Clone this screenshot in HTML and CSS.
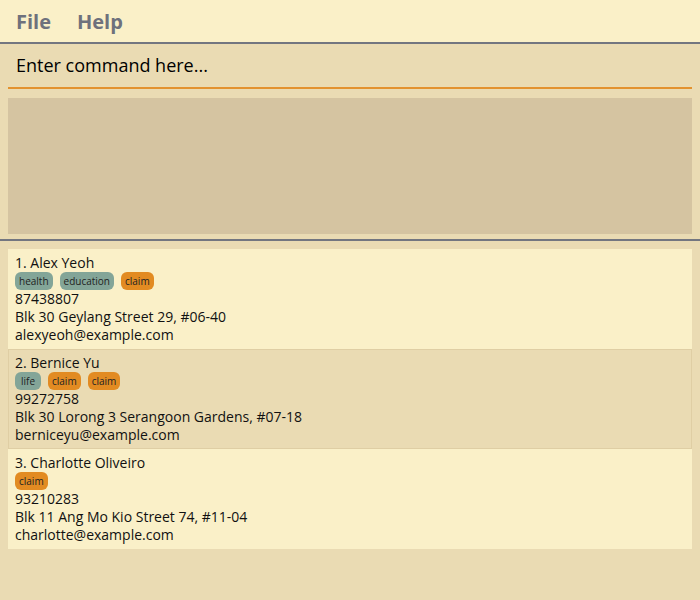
FILE: index.html
```html
<!DOCTYPE html>
<html lang="en">
<head>
<meta charset="utf-8">
<meta name="viewport" content="width=device-width, initial-scale=1">
<title>Contacts</title>
<link rel="stylesheet" href="styles.css">
</head>
<body>
<header class="menu">
  <button class="menu-item" type="button">File</button>
  <button class="menu-item" type="button">Help</button>
</header>
<section class="console">
  <input class="command" type="text" aria-label="Command" placeholder="Enter command here...">
  <div class="result" role="status"></div>
</section>
<main class="people">
  <article class="person">
    <h2 class="name">1. Alex Yeoh</h2>
    <div class="tags"><span class="tag">health</span><span class="tag">education</span><span class="tag claim">claim</span></div>
    <p>87438807</p>
    <p>Blk 30 Geylang Street 29, #06-40</p>
    <p>alexyeoh@example.com</p>
  </article>
  <article class="person">
    <h2 class="name">2. Bernice Yu</h2>
    <div class="tags"><span class="tag">life</span><span class="tag claim">claim</span><span class="tag claim">claim</span></div>
    <p>99272758</p>
    <p>Blk 30 Lorong 3 Serangoon Gardens, #07-18</p>
    <p>berniceyu@example.com</p>
  </article>
  <article class="person">
    <h2 class="name">3. Charlotte Oliveiro</h2>
    <div class="tags"><span class="tag claim">claim</span></div>
    <p>93210283</p>
    <p>Blk 11 Ang Mo Kio Street 74, #11-04</p>
    <p>charlotte@example.com</p>
  </article>
</main>
</body>
</html>
```

FILE: styles.css
```css
* {
  box-sizing: border-box;
}

body {
  margin: 0;
  background: #eadbb3;
  color: #111;
  font: 14px/18px "Open Sans", "Noto Sans", sans-serif;
}

h2,
p {
  margin: 0;
}

.menu {
  display: flex;
  gap: 26px;
  padding: 7px 16px 5px;
  background: #faf0c8;
  border-bottom: 2px solid #737680;
}

.menu-item {
  padding: 0;
  border: 0;
  background: none;
  color: #6e717c;
  font: 700 20px/30px "Open Sans", "Noto Sans", sans-serif;
}

.console {
  padding: 0 8px 5px;
  border-bottom: 2px solid #737680;
}

.command {
  display: block;
  width: 100%;
  height: 45px;
  margin-bottom: 9px;
  padding: 0 8px 2px;
  border: 0;
  border-bottom: 2px solid #e3922f;
  outline: 0;
  background: none;
  color: #000;
  font: 18px/24px "Open Sans", "Noto Sans", sans-serif;
}

.command::placeholder {
  color: #000;
  opacity: 1;
}

.result {
  height: 136px;
  background: #d5c4a1;
}

.people {
  padding: 8px;
}

.person {
  padding: 4px 6px;
  border: 1px solid #faf0c8;
  background: #faf0c8;
}

.person:nth-child(even) {
  border-color: #dfcea4;
  background: #eadbb3;
}

.name {
  font-size: 14px;
  font-weight: 400;
  line-height: 18px;
}

.tags {
  display: flex;
  gap: 7px;
}

.tag {
  min-width: 26px;
  padding: 0 4px;
  border-radius: 6px;
  background: #83a598;
  color: #222;
  font-size: 10px;
  text-align: center;
}

.claim {
  background: #e28b22;
}
```
